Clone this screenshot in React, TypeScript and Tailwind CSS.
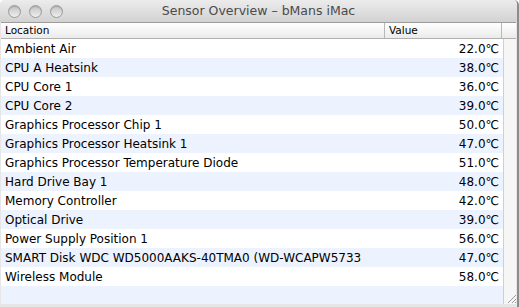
import React from 'react'

const rows: [string, string][] = [
  ['Ambient Air', '22.0℃'],
  ['CPU A Heatsink', '38.0℃'],
  ['CPU Core 1', '36.0℃'],
  ['CPU Core 2', '39.0℃'],
  ['Graphics Processor Chip 1', '50.0℃'],
  ['Graphics Processor Heatsink 1', '47.0℃'],
  ['Graphics Processor Temperature Diode', '51.0℃'],
  ['Hard Drive Bay 1', '48.0℃'],
  ['Memory Controller', '42.0℃'],
  ['Optical Drive', '39.0℃'],
  ['Power Supply Position 1', '56.0℃'],
  ['SMART Disk WDC WD5000AAKS-40TMA0 (WD-WCAPW5733', '47.0℃'],
  ['Wireless Module', '58.0℃'],
]

function Light() {
  return (
    <div className="w-[13px] h-[13px] rounded-full border border-[#9a9a9a] bg-gradient-to-b from-[#c4c4c4] to-[#eeeeee] shadow-[inset_0_1px_1px_rgba(0,0,0,0.15)]" />
  )
}

export default function App() {
  return (
    <div className="w-[519px] h-[307px] overflow-hidden bg-[#e6e6e6] flex flex-col rounded-t-[5px] border-r-2 border-[#8c8c8c]" style={{ fontFamily: '"DejaVu Sans", Verdana, sans-serif' }}>
      {/* title bar */}
      <div className="h-[22px] shrink-0 relative flex items-center bg-gradient-to-b from-[#ececec] to-[#d2d2d2]">
        <div className="flex items-center gap-[8px] pl-[8px]">
          <Light />
          <Light />
          <Light />
        </div>
        <div className="absolute inset-0 flex items-center justify-center text-[12.5px] text-[#4a4a4a] pt-[1px]">
          Sensor Overview – bMans iMac
        </div>
      </div>

      <div className="flex-1 flex flex-col mx-[1px] mb-[3px] bg-white border-t border-[#9c9c9c] overflow-hidden">
        {/* header */}
        <div className="h-[16px] shrink-0 flex border-b border-[#b0b0b0] bg-gradient-to-b from-[#ffffff] to-[#ebebeb] text-[10.5px] text-black leading-[15px]">
          <div className="w-[384px] pl-[4px] border-r border-[#b8b8b8]">Location</div>
          <div className="w-[117px] pl-[4px] border-r border-[#b8b8b8]">Value</div>
          <div className="flex-1" />
        </div>

        {/* body */}
        <div className="flex-1 flex overflow-hidden">
          <div className="w-[502px] flex flex-col">
            {rows.map(([name, value], i) => (
              <div key={name} className={`h-[19px] shrink-0 flex items-center text-[12px] text-black ${i % 2 === 0 ? 'bg-white' : 'bg-[#edf3fe]'}`}>
                <div className="w-[385px] pl-[4px] whitespace-nowrap overflow-hidden">{name}</div>
                <div className="w-[117px] pr-[4px] text-right whitespace-nowrap">{value}</div>
              </div>
            ))}
            <div className="flex-1 bg-[#edf3fe]" />
          </div>
          <div className="flex-1 flex flex-col bg-[#f6f6f6] border-l border-[#d0d0d0]">
            <div className="flex-1" />
            <svg width="14" height="14" viewBox="0 0 14 14" className="self-end">
              <path d="M13 4 L4 13 M13 8 L8 13 M13 11 L11 13" stroke="#9a9a9a" strokeWidth="1" />
            </svg>
          </div>
        </div>
      </div>
    </div>
  )
}
